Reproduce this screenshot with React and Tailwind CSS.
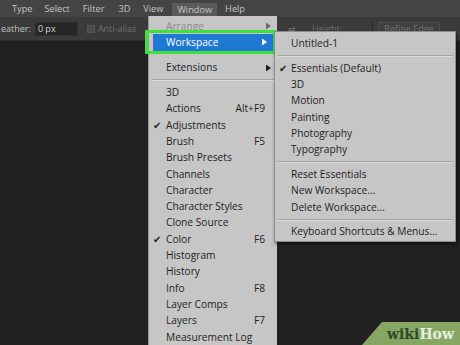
import { Fragment } from "react";

const mainItems = [
  { label: "3D" },
  { label: "Actions", key: "Alt+F9" },
  { label: "Adjustments", check: true },
  { label: "Brush", key: "F5" },
  { label: "Brush Presets" },
  { label: "Channels" },
  { label: "Character" },
  { label: "Character Styles" },
  { label: "Clone Source" },
  { label: "Color", key: "F6", check: true },
  { label: "Histogram" },
  { label: "History" },
  { label: "Info", key: "F8" },
  { label: "Layer Comps" },
  { label: "Layers", key: "F7" },
  { label: "Measurement Log" },
];

const subGroups = [
  [{ label: "Untitled-1" }],
  [
    { label: "Essentials (Default)", check: true },
    { label: "3D" },
    { label: "Motion" },
    { label: "Painting" },
    { label: "Photography" },
    { label: "Typography" },
  ],
  [{ label: "Reset Essentials" }, { label: "New Workspace..." }, { label: "Delete Workspace..." }],
  [{ label: "Keyboard Shortcuts & Menus..." }],
];

const font = { fontFamily: '"Open Sans", "Noto Sans", sans-serif' };

function Arrow({ color = "#333" }) {
  return (
    <svg width="5" height="7" viewBox="0 0 5 7" className="absolute right-[6px] top-1/2 -translate-y-1/2">
      <path d="M0 0 L5 3.5 L0 7 Z" fill={color} />
    </svg>
  );
}

function Check() {
  return <span className="absolute left-[4px] top-0 text-[10px] leading-[16.3px] text-[#222]">✔</span>;
}

function MenuRow({ item }) {
  return (
    <div className="relative h-[16.3px] pl-[17px] pr-[12px] flex items-center justify-between text-[10.2px] text-[#1e1e1e]">
      {item.check && <Check />}
      <span>{item.label}</span>
      {item.key && <span>{item.key}</span>}
    </div>
  );
}

function Sep() {
  return (
    <div className="flex flex-col justify-center h-[8.5px] pl-[3px] pr-[2px]">
      <div className="h-px bg-[#a3a3a3]" />
      <div className="h-px bg-[#dadada]" />
    </div>
  );
}

export default function App() {
  return (
    <div className="relative w-[460px] h-[345px] overflow-hidden bg-[#212121] flex flex-col" style={font}>
      {/* menu bar */}
      <div className="h-[17px] bg-[#444444] flex items-center text-[9.2px] text-[#c4c4c4]">
        <span className="ml-[12px]">Type</span>
        <span className="ml-[12px]">Select</span>
        <span className="ml-[13px]">Filter</span>
        <span className="ml-[14px]">3D</span>
        <span className="ml-[13px]">View</span>
        <span className="ml-[9px] px-[5px] h-[14px] mt-[2px] bg-[#5a5a5a] flex items-center">Window</span>
        <span className="ml-[8px]">Help</span>
      </div>

      {/* options bar */}
      <div className="h-[24px] bg-[#3a3a3a] border-b border-[#2a2a2a] flex items-center text-[9px] text-[#c2c2c2]">
        <span className="ml-[1px]">eather:</span>
        <div className="ml-[4px] w-[43px] h-[14px] bg-[#262626] border border-[#2f2f2f] flex items-center pl-[2px] text-[#d0d0d0]">
          0 px
        </div>
        <div className="ml-[9px] w-[8px] h-[8px] bg-[#4a4a4a] border border-[#555]" />
        <span className="ml-[3px] text-[#707070]">Anti-alias</span>
        <span className="ml-[13px]">St</span>
        <div className="flex-1" />
        <span className="text-[#6a6a6a] mr-[16px]">⇄</span>
        <span className="text-[#6e6e6e]">Height:</span>
        <div className="ml-[30px] w-px h-[16px] bg-[#2a2a2a]" />
        <div className="ml-[5px] mr-[20px] w-[62px] h-[14px] border border-[#4e4e4e] bg-[#404040] flex items-center justify-center text-[#727272]">
          Refine Edge
        </div>
      </div>
      <div className="flex-1" />

      {/* Window menu */}
      <div className="absolute left-[148px] top-[16px] w-[129px] h-[340px] bg-[#c6c6c6] border-l border-[#9a9a9a] pt-[2px]">
        <div className="relative h-[16.3px] pl-[17px] flex items-center text-[10.2px] text-[#8a8a8a]">
          Arrange
          <Arrow color="#6a6a6a" />
        </div>
        <div className="relative h-[16.3px] mx-[4px] bg-[#1f78d1] pl-[13px] flex items-center text-[10.2px] text-white">
          Workspace
          <Arrow color="#ffffff" />
        </div>
        <div className="h-[9.2px]" />
        <div className="relative h-[16.3px] pl-[17px] flex items-center text-[10.2px] text-[#1e1e1e]">
          Extensions
          <Arrow color="#1e1e1e" />
        </div>
        <Sep />
        {mainItems.map((it) => (
          <MenuRow key={it.label} item={it} />
        ))}
      </div>

      {/* green highlight box */}
      <div className="absolute left-[145px] top-[30px] w-[131px] h-[24px] border-[3px] border-[#3ee23a] rounded-[1px]" />

      {/* Workspace submenu */}
      <div className="absolute left-[274px] top-[31px] w-[182px] bg-[#c6c6c6] border border-[#8e8e8e] shadow-[1px_2px_3px_rgba(0,0,0,0.5)] pt-[3.5px] pb-[1px]">
        {subGroups.map((g, i) => (
          <Fragment key={i}>
            {i > 0 && <Sep />}
            {g.map((it) => (
              <div key={it.label} className="relative h-[16.3px] pl-[16px] flex items-center text-[10.2px] text-[#1e1e1e]">
                {it.check && <Check />}
                {it.label}
              </div>
            ))}
          </Fragment>
        ))}
      </div>

      {/* wikiHow badge */}
      <div className="absolute right-0 bottom-0 w-[98px] h-[23px] bg-[#86a764] [clip-path:polygon(20px_0,100%_0,100%_100%,0_100%)] flex items-center justify-end pr-[6px]">
        <span className="text-[14px] font-bold leading-none" style={{ fontFamily: '"DejaVu Serif", serif' }}>
          <span className="text-[#2f4a24]">wiki</span>
          <span className="text-[#e8eee0]">How</span>
        </span>
      </div>
    </div>
  );
}
